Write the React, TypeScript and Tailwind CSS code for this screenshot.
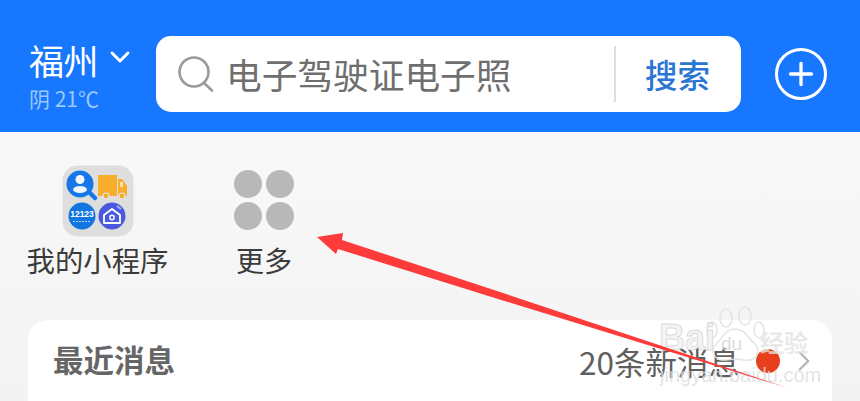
import { ChevronDown, ChevronRight, Plus } from "lucide-react";

const cjk = "font-['Noto_Sans_CJK_SC','Noto_Sans',sans-serif]";

const MiniProgramIcon = () => (
  <svg width="72" height="72" viewBox="0 0 72 72">
    <rect x="0.5" y="0.5" width="71" height="71" rx="15" fill="#dedede" />
    {/* person + magnifier */}
    <path d="M28 28 L33 33" stroke="#1677e8" strokeWidth="4.5" strokeLinecap="round" />
    <circle cx="18" cy="19" r="13.5" fill="#1677e8" />
    <circle cx="18" cy="14.5" r="4.5" fill="#f2f6fb" />
    <ellipse cx="18" cy="24.5" rx="7" ry="3.5" fill="#f2f6fb" />
    {/* truck */}
    <rect x="36" y="10" width="19" height="21" fill="#f9ad2d" />
    <path d="M56 14 h4 l5 7 v10 h-9 z" fill="#f9ad2d" />
    <rect x="58" y="17" width="3" height="5" fill="#fde3b5" />
    <circle cx="44" cy="31" r="3" fill="#f9ad2d" stroke="#e6e6e6" strokeWidth="1.2" />
    <circle cx="60" cy="31" r="3" fill="#f9ad2d" stroke="#e6e6e6" strokeWidth="1.2" />
    {/* 12123 badge */}
    <circle cx="20" cy="51" r="13.5" fill="#1276e0" />
    <text x="20" y="52" textAnchor="middle" fontSize="8.5" fontWeight="700" fill="#fff" fontFamily="Liberation Sans, sans-serif">12123</text>
    <path d="M11 56.5 H29" stroke="#a9d2f7" strokeWidth="1.2" strokeDasharray="2 1" />
    {/* home badge */}
    <circle cx="50" cy="51" r="13.5" fill="#4a5ae0" />
    <path d="M42 50 L50 44 L58 50 V58 H42 Z" fill="none" stroke="#fff" strokeWidth="1.8" strokeLinejoin="round" />
    <circle cx="50" cy="52.5" r="2.2" fill="none" stroke="#fff" strokeWidth="1.4" />
    <path d="M55 41 L59 44" stroke="#aab2f2" strokeWidth="1.8" />
  </svg>
);

const SearchIcon = () => (
  <svg className="shrink-0" width="38" height="38" viewBox="0 0 38 38" fill="none" stroke="#9b9b9b">
    <circle cx="17" cy="17" r="14.5" strokeWidth="2.6" />
    <path d="M27.5 28.5 L35 35.5" strokeWidth="2.6" strokeLinecap="round" />
  </svg>
);

const BaiduWatermark = () => (
  <div className="absolute left-[655px] top-[304px] w-[200px] h-[97px]">
    <svg className="absolute left-[14px] top-[0px]" width="150" height="70" viewBox="0 0 150 70">
      <g fill="none" stroke="#dedede" strokeOpacity="0.8" strokeWidth="1.6">
        <ellipse cx="57" cy="14" rx="6" ry="9" />
        <ellipse cx="76" cy="12" rx="6" ry="9" />
        <ellipse cx="43" cy="26" rx="5" ry="8" />
        <ellipse cx="90" cy="26" rx="5" ry="8" />
        <path d="M66 25 C56 25 54 34 48 39 C40 46 45 58 58 56 C63 55 70 55 75 56 C88 58 93 46 85 39 C79 34 76 25 66 25 Z" />
      </g>
    </svg>
    <span className="absolute left-[4px] top-[2px] text-[36px] leading-[64px] font-bold font-['Liberation_Sans',sans-serif] text-[#f2f2f2]/80 [-webkit-text-stroke:1px_#dcdcdc]">
      Bai
    </span>
    <span className="absolute left-[66px] top-[20px] text-[19px] leading-[40px] font-['Liberation_Sans',sans-serif] text-[#d4d4d4]/80">
      du
    </span>
    <span className={`absolute left-[105px] top-[24px] text-[24px] leading-[28px] font-bold text-[#e4e4e4]/80 ${cjk}`}>
      经验
    </span>
    <span className="absolute left-[5px] top-[59px] text-[20px] leading-[24px] font-['Liberation_Sans',sans-serif] text-[#dcdcdc]/80">
      jingyan.baidu.com
    </span>
  </div>
);

const App = () => {
  return (
    <div className={`relative w-[860px] h-[401px] overflow-hidden bg-gradient-to-b from-[#fbfbfb] to-[#f3f3f3] ${cjk}`}>
      {/* Header */}
      <div className="h-[132px] bg-[#1877ff] flex items-start pl-[29px] pt-[36px]">
        <div className="w-[127px] text-white">
          <div className="flex items-center h-[48px]">
            <span className="text-[35px] leading-[48px] tracking-[-0.5px]">福州</span>
            <ChevronDown className="ml-[6px] mt-[-7px]" size={32} strokeWidth={2.2} />
          </div>
          <div className="text-[21px] leading-[24px] mt-[2px] text-[#9cc8ff]">阴 21℃</div>
        </div>
        <div className="w-[585px] h-[76px] bg-white rounded-[15px] flex items-center pl-[21px]">
          <SearchIcon />
          <span className="ml-[11px] w-[388px] text-[35.7px] leading-[48px] text-[#6f6f6f] whitespace-nowrap">电子驾驶证电子照</span>
          <div className="w-[2px] h-[56px] bg-[#d6e0e8]" />
          <span className="ml-[29px] text-[32.5px] leading-[44px] font-medium text-[#2a76d2]">搜索</span>
        </div>
        <div className="ml-[34px] mt-[12px] w-[52px] h-[52px] rounded-full border-[3px] border-white flex items-center justify-center text-white">
          <Plus size={36} strokeWidth={2.2} />
        </div>
      </div>

      {/* Mini programs */}
      <div className="h-[188px] flex items-start pl-[26px] pt-[33px]">
        <div className="w-[143px] flex flex-col items-center">
          <MiniProgramIcon />
          <span className="mt-[3px] text-[28.4px] leading-[40px] text-[#3a3a3a] whitespace-nowrap">我的小程序</span>
        </div>
        <div className="ml-[65px] w-[60px] flex flex-col items-center">
          <div className="grid grid-cols-2 gap-[4px] mt-[5px]">
            <div className="w-[28px] h-[28px] rounded-full bg-[#b8b8b8]" />
            <div className="w-[28px] h-[28px] rounded-full bg-[#b8b8b8]" />
            <div className="w-[28px] h-[28px] rounded-full bg-[#b8b8b8]" />
            <div className="w-[28px] h-[28px] rounded-full bg-[#b8b8b8]" />
          </div>
          <span className="mt-[10px] text-[28px] leading-[40px] text-[#3a3a3a] whitespace-nowrap">更多</span>
        </div>
      </div>

      {/* Recent messages card */}
      <div className="ml-[28px] w-[804px] h-[120px] bg-white rounded-t-[20px] flex items-start pl-[25px] pt-[18px]">
        <span className="text-[30.5px] leading-[42px] font-bold text-[#666666]">最近消息</span>
        <div className="ml-auto flex items-center h-[46px]">
          <span className="text-[31.5px] leading-[46px] text-[#5f5f5f] whitespace-nowrap">20条新消息</span>
          <span className="ml-[16px] w-[24px] h-[24px] rounded-full bg-[#e8401c]" />
          <ChevronRight className="ml-[7px] mr-[11px] text-[#b5b5b5]" size={34} strokeWidth={1.6} />
        </div>
      </div>

      <BaiduWatermark />

      {/* Annotation arrow */}
      <svg className="absolute left-0 top-0" width="860" height="401" viewBox="0 0 860 401">
        <path
          d="M317 237 L343 233 L342 240 L500 292 L788 388 L498 299 L338 249 L336 254 Z"
          fill="#fd3b3b"
        />
      </svg>
    </div>
  );
};

export default App;
